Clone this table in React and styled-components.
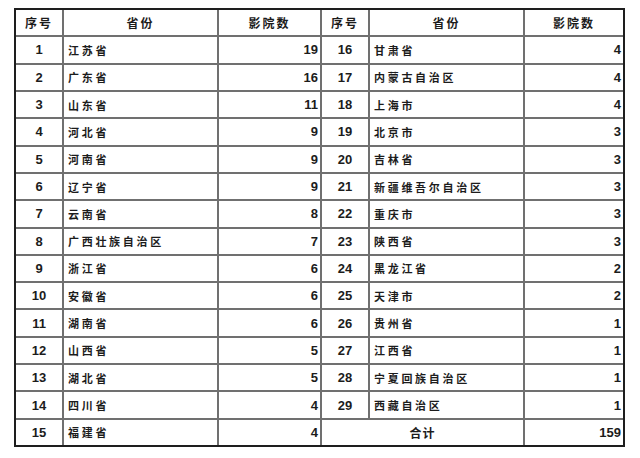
import React from 'react';
import styled, { createGlobalStyle } from 'styled-components';

const GlobalStyle = createGlobalStyle`
  html, body { margin: 0; padding: 0; background: #fff; }
  body { width: 640px; height: 458px; overflow: hidden; }
`;

const Page = styled.div`
  padding: 8px 0 0 14px;
`;

const Grid = styled.div`
  width: 611px; height: 439px; box-sizing: border-box;
  border: 2px solid #1e1e1e; background: #707070;
  display: grid; gap: 2px;
  grid-template-columns: 46px 153px 101px 46px 153px 98px;
  grid-template-rows: repeat(16, 1fr);
`;

const Cell = styled.div`
  background: #fff; color: #1c1c1c;
  display: flex; align-items: center;
  justify-content: ${p => (p.$align === 'left' ? 'flex-start' : p.$align === 'right' ? 'flex-end' : 'center')};
  padding: ${p => (p.$align === 'left' ? '0 0 0 4px' : p.$align === 'right' ? '0 2px 0 0' : '0')};
  grid-column: span ${p => p.$span || 1};
  overflow: hidden; white-space: nowrap;
`;

const Head = styled(Cell)`
  font-family: "Noto Sans CJK SC", sans-serif; font-weight: 600;
  font-size: 12px; letter-spacing: ${p => (p.$span ? '1px' : '2px')};
`;

const Num = styled(Cell)`
  font-family: "Liberation Sans", Arial, sans-serif; font-weight: 700; font-size: 13px;
`;

const Name = styled(Cell)`
  font-family: "Noto Sans CJK SC", sans-serif; font-weight: 600;
  font-size: 11px; letter-spacing: 2.7px;
`;

const left = [
  [1, '江苏省', 19], [2, '广东省', 16], [3, '山东省', 11], [4, '河北省', 9],
  [5, '河南省', 9], [6, '辽宁省', 9], [7, '云南省', 8], [8, '广西壮族自治区', 7],
  [9, '浙江省', 6], [10, '安徽省', 6], [11, '湖南省', 6], [12, '山西省', 5],
  [13, '湖北省', 5], [14, '四川省', 4], [15, '福建省', 4],
];

const right = [
  [16, '甘肃省', 4], [17, '内蒙古自治区', 4], [18, '上海市', 4], [19, '北京市', 3],
  [20, '吉林省', 3], [21, '新疆维吾尔自治区', 3], [22, '重庆市', 3], [23, '陕西省', 3],
  [24, '黑龙江省', 2], [25, '天津市', 2], [26, '贵州省', 1], [27, '江西省', 1],
  [28, '宁夏回族自治区', 1], [29, '西藏自治区', 1],
];

export default function App() {
  return (
    <Page>
      <GlobalStyle />
      <Grid>
        {[0, 1].map(k => (
          <React.Fragment key={k}>
            <Head>序号</Head>
            <Head>省份</Head>
            <Head>影院数</Head>
          </React.Fragment>
        ))}
        {left.map((l, i) => {
          const r = right[i];
          return (
            <React.Fragment key={l[0]}>
              <Num>{l[0]}</Num>
              <Name $align="left">{l[1]}</Name>
              <Num $align="right">{l[2]}</Num>
              {r ? (
                <>
                  <Num>{r[0]}</Num>
                  <Name $align="left">{r[1]}</Name>
                  <Num $align="right">{r[2]}</Num>
                </>
              ) : (
                <>
                  <Head $span={2}>合计</Head>
                  <Num $align="right">159</Num>
                </>
              )}
            </React.Fragment>
          );
        })}
      </Grid>
    </Page>
  );
}
